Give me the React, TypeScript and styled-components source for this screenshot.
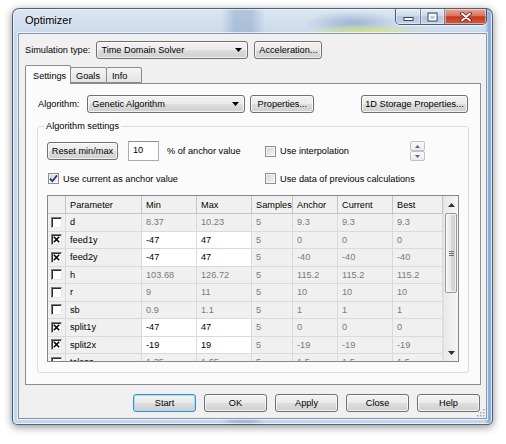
import styled, { createGlobalStyle } from 'styled-components'

const GlobalStyle = createGlobalStyle`
  html, body { margin: 0; padding: 0; background: #fff; }
  body {
    font-family: "Liberation Sans", Arial, sans-serif;
    font-size: 9.2px;
    color: #000;
  }
  * { box-sizing: border-box; }
`

const Desktop = styled.div`
  width: 506px;
  height: 444px;
  padding: 8px 0 0 12px;
  background: #fff;
`

const Window = styled.div`
  width: 481px;
  height: 417px;
  display: flex;
  flex-direction: column;
  padding: 0 5px 5px;
  border: 1px solid rgba(50, 68, 92, 0.8);
  border-radius: 7px 7px 5px 5px;
  box-shadow: 0 2px 9px rgba(0, 0, 0, 0.45), inset 0 0 0 1px rgba(255, 255, 255, 0.6);
  background:
    radial-gradient(ellipse 62px 9px at 352px 24px, rgba(214, 232, 112, 0.9), rgba(214, 232, 112, 0) 100%),
    radial-gradient(ellipse 48px 12px at 340px 14px, rgba(96, 128, 172, 0.45), rgba(96, 128, 172, 0) 100%),
    linear-gradient(90deg, rgba(255, 255, 255, 0) 208px, rgba(104, 136, 178, 0.35) 222px, rgba(104, 136, 178, 0.35) 238px, rgba(255, 255, 255, 0) 252px),
    linear-gradient(90deg, rgba(255, 255, 255, 0) 472px, rgba(120, 160, 214, 0.8) 476px, rgba(120, 160, 214, 0.8) 477px, rgba(255, 255, 255, 0) 480px),
    linear-gradient(180deg, #dbe6f2 0px, #c8d8ea 28px, #c3d6ec 100%);
`

const TitleBar = styled.div`
  height: 24px;
  display: flex;
  align-items: flex-start;
  justify-content: space-between;
`

const Caption = styled.div`
  padding-left: 7px;
  line-height: 22px;
  font-size: 11px;
  text-shadow: 0 0 6px rgba(255, 255, 255, 0.95);
`

const CaptionButtons = styled.div`
  display: flex;
  height: 16px;
  border: 1px solid rgba(42, 58, 82, 0.8);
  border-top: none;
  border-radius: 0 0 5px 5px;
  overflow: hidden;
  box-shadow: 0 1px 0 rgba(255, 255, 255, 0.6);
`

const CaptionBtn = styled.div<{ $w: number; $close?: boolean }>`
  width: ${p => p.$w}px;
  display: flex;
  align-items: center;
  justify-content: center;
  border-right: ${p => (p.$close ? 'none' : '1px solid rgba(42, 58, 82, 0.55)')};
  background: ${p =>
    p.$close
      ? 'linear-gradient(#e9a897 0%, #d8735c 45%, #c53b1f 52%, #d65a3c 100%)'
      : 'linear-gradient(#e6edf5 0%, #cddaea 45%, #b4c7de 52%, #c3d3e6 100%)'};
  box-shadow: inset 0 0 0 1px rgba(255, 255, 255, 0.45);
`

const Client = styled.div`
  flex: 1;
  position: relative;
  display: flex;
  flex-direction: column;
  background: #f0f0f0;
  border: 1px solid #8596aa;
  box-shadow: 0 0 0 1px rgba(255, 255, 255, 0.65);
  padding: 7px 5px 6px 6px;
`

const TopRow = styled.div`
  display: flex;
  align-items: center;
  height: 18px;
  gap: 6px;
`

const Text = styled.span`
  white-space: nowrap;
`

const WinButton = styled.div<{ $w: number; $default?: boolean }>`
  width: ${p => p.$w}px;
  height: 18px;
  flex: none;
  display: flex;
  align-items: center;
  justify-content: center;
  white-space: nowrap;
  border: 1px solid ${p => (p.$default ? '#3c8fc4' : '#707070')};
  border-radius: 3px;
  background: linear-gradient(#f2f2f2 0%, #ebebeb 48%, #dddddd 52%, #cfcfcf 100%);
  box-shadow: inset 0 0 0 1px ${p => (p.$default ? 'rgba(160, 220, 245, 0.9)' : 'rgba(255, 255, 255, 0.7)')};
`

const Combo = styled(WinButton)`
  justify-content: space-between;
  padding: 0 5px 0 4px;
`

const TabStrip = styled.div`
  margin-top: 6px;
  height: 18px;
  display: flex;
  align-items: flex-end;
  position: relative;
  z-index: 1;
`

const Tab = styled.div<{ $w: number; $active?: boolean }>`
  width: ${p => p.$w}px;
  height: ${p => (p.$active ? 19 : 16)}px;
  margin-bottom: ${p => (p.$active ? -1 : 0)}px;
  margin-left: ${p => (p.$active ? 0 : -1)}px;
  padding-left: ${p => (p.$active ? 7 : 5)}px;
  padding-top: ${p => (p.$active ? 2 : 1)}px;
  display: flex;
  align-items: center;
  align-self: flex-start;
  border: 1px solid #898c95;
  border-bottom: ${p => (p.$active ? 'none' : '1px solid #898c95')};
  border-radius: 2px 2px 0 0;
  background: ${p => (p.$active ? '#fbfbfb' : 'linear-gradient(#f5f5f5, #e3e3e3)')};
  ${p => (!p.$active ? 'margin-top: 2px;' : '')}
`

const Panel = styled.div`
  height: 302px;
  display: flex;
  flex-direction: column;
  background: #fbfbfb;
  border: 1px solid #898c95;
  padding: 11px 11px 0;
`

const AlgRow = styled.div`
  display: flex;
  align-items: center;
  height: 18px;
  padding: 0 1px;
  gap: 5px;
`

const AlgLabel = styled(Text)`
  margin-right: 3px;
`

const RightButton = styled(WinButton)`
  margin-left: auto;
`

const GroupBox = styled.div`
  margin-top: 13px;
  display: flex;
  flex-direction: column;
  border: 1px solid #d5dfe5;
  border-radius: 3px;
  padding: 0 9px 10px;
`

const Legend = styled.span`
  align-self: flex-start;
  margin: -6px 0 0 -3px;
  padding: 0 2px;
  line-height: 11px;
  background: #fbfbfb;
`

const OptionRow = styled.div<{ $h: number; $gap: number }>`
  display: grid;
  grid-template-columns: 217px 1fr;
  align-items: center;
  height: ${p => p.$h}px;
  margin-top: ${p => p.$gap}px;
`

const Cluster = styled.div`
  display: flex;
  align-items: center;
`

const NumberInput = styled.div`
  width: 31px;
  height: 20px;
  margin: 0 8px 0 10px;
  padding: 0 0 2px 4px;
  display: flex;
  align-items: center;
  background: #fff;
  border: 1px solid #abadb3;
  border-top-color: #8d8f95;
`

const CheckLabel = styled.div`
  display: flex;
  align-items: center;
  gap: 4px;
  padding-left: 1px;
`

const WinCheck = styled.span`
  width: 11px;
  height: 11px;
  flex: none;
  display: flex;
  align-items: center;
  justify-content: center;
  border: 1px solid #8e8f8f;
  background: linear-gradient(135deg, #d3d3d3 0%, #f7f7f7 100%);
  box-shadow: inset 0 0 0 1px rgba(255, 255, 255, 0.6);
`

const Spinner = styled.div`
  width: 15px;
  height: 20px;
  margin-left: auto;
  margin-right: 34px;
  display: flex;
  flex-direction: column;
`

const SpinHalf = styled.div`
  flex: 1;
  display: flex;
  align-items: center;
  justify-content: center;
  border: 1px solid #c2c2c2;
  border-radius: 2px;
  background: linear-gradient(#fbfbfb, #ebebeb);
`

const TableFrame = styled.div`
  margin-top: 8px;
  height: 167px;
  display: flex;
  border: 1px solid #828790;
  background: #f0f0f0;
  overflow: hidden;
`

const Grid = styled.div`
  width: 395px;
  display: grid;
  grid-template-columns: 18px 76px 55px 55px 41px 45px 55px 50px;
  grid-template-rows: 18px;
  grid-auto-rows: 17.5px;
  align-content: start;
  overflow: hidden;
`

const HeadCell = styled.div`
  display: flex;
  align-items: center;
  padding-left: 4px;
  white-space: nowrap;
  overflow: hidden;
  border-right: 1px solid #c4c4c4;
  border-bottom: 1px solid #c4c4c4;
`

const Cell = styled.div<{ $edit?: boolean; $dark?: boolean }>`
  display: flex;
  align-items: center;
  padding-left: 4px;
  white-space: nowrap;
  overflow: hidden;
  border-right: 1px solid #dadada;
  border-bottom: 1px solid #dadada;
  background: ${p => (p.$edit ? '#fff' : '#f0f0f0')};
  color: ${p => (p.$edit || p.$dark ? '#000' : '#7a7a7a')};
`

const BoxCell = styled(Cell)`
  justify-content: center;
  padding-left: 0;
`

const ClassicBox = styled.span`
  width: 11px;
  height: 11px;
  display: flex;
  align-items: center;
  justify-content: center;
  background: #fff;
  border: 1px solid;
  border-color: #7b7b7b #e6e6e6 #e6e6e6 #7b7b7b;
  box-shadow: inset 1px 1px 0 #2e2e2e;
`

const ScrollBar = styled.div`
  width: 15px;
  display: flex;
  flex-direction: column;
  border-left: 1px solid #e2e2e2;
  background: linear-gradient(90deg, #e9e9e9, #f5f5f5);
`

const ScrollArrow = styled.div`
  height: 17px;
  flex: none;
  display: flex;
  align-items: center;
  justify-content: center;
`

const Thumb = styled.div`
  height: 80px;
  margin: 0 1px;
  display: flex;
  align-items: center;
  justify-content: center;
  border: 1px solid #979797;
  border-radius: 2px;
  background: linear-gradient(90deg, #f4f4f4 0%, #e8e8e8 50%, #d8d8d8 51%, #cfcfcf 100%);
  box-shadow: inset 0 0 0 1px rgba(255, 255, 255, 0.7);
`

const ScrollSpace = styled.div`
  flex: 1;
`

const Footer = styled.div`
  margin-top: 9px;
  display: flex;
  justify-content: flex-end;
  gap: 8px;
  padding-right: 1px;
`

const Grip = styled.svg`
  position: absolute;
  right: 1px;
  bottom: 1px;
`

const Tri = ({ up, color = '#000', w = 7, h = 4 }: { up?: boolean; color?: string; w?: number; h?: number }) => (
  <svg width={w} height={h} viewBox={`0 0 ${w} ${h}`}>
    <polygon points={up ? `0,${h} ${w},${h} ${w / 2},0` : `0,0 ${w},0 ${w / 2},${h}`} fill={color} />
  </svg>
)

const Check = () => (
  <svg width="9" height="9" viewBox="0 0 9 9">
    <path d="M1 4.6 L3.4 7.2 L8 1.4" fill="none" stroke="#24387a" strokeWidth="1.7" />
  </svg>
)

const Cross = () => (
  <svg width="7" height="7" viewBox="0 0 7 7">
    <path d="M0.8 0.8 L6.2 6.2 M6.2 0.8 L0.8 6.2" stroke="#000" strokeWidth="1.6" />
  </svg>
)

const columns = ['Parameter', 'Min', 'Max', 'Samples', 'Anchor', 'Current', 'Best']

const rows = [
  { name: 'd', on: false, v: ['8.37', '10.23', '5', '9.3', '9.3', '9.3'] },
  { name: 'feed1y', on: true, v: ['-47', '47', '5', '0', '0', '0'] },
  { name: 'feed2y', on: true, v: ['-47', '47', '5', '-40', '-40', '-40'] },
  { name: 'h', on: false, v: ['103.68', '126.72', '5', '115.2', '115.2', '115.2'] },
  { name: 'r', on: false, v: ['9', '11', '5', '10', '10', '10'] },
  { name: 'sb', on: false, v: ['0.9', '1.1', '5', '1', '1', '1'] },
  { name: 'split1y', on: true, v: ['-47', '47', '5', '0', '0', '0'] },
  { name: 'split2x', on: true, v: ['-19', '19', '5', '-19', '-19', '-19'] },
  { name: 'tclass', on: false, v: ['1.35', '1.65', '5', '1.5', '1.5', '1.5'] },
]

export default function App() {
  return (
    <>
      <GlobalStyle />
      <Desktop>
        <Window>
          <TitleBar>
            <Caption>Optimizer</Caption>
            <CaptionButtons>
              <CaptionBtn $w={25}>
                <svg width="11" height="10" viewBox="0 0 11 10">
                  <rect x="1" y="5.5" width="9" height="3" fill="#fff" stroke="#34465e" strokeWidth="1" />
                </svg>
              </CaptionBtn>
              <CaptionBtn $w={24}>
                <svg width="11" height="10" viewBox="0 0 11 10">
                  <rect x="1" y="1" width="9" height="8" fill="none" stroke="#34465e" strokeWidth="1" />
                  <rect x="2.5" y="3" width="6" height="4.5" fill="none" stroke="#fff" strokeWidth="1.5" />
                </svg>
              </CaptionBtn>
              <CaptionBtn $w={41} $close>
                <svg width="12" height="10" viewBox="0 0 12 10">
                  <path d="M2 1.5 L10 8.5 M10 1.5 L2 8.5" stroke="#5a1a10" strokeWidth="3.6" strokeLinecap="round" />
                  <path d="M2 1.5 L10 8.5 M10 1.5 L2 8.5" stroke="#fff" strokeWidth="2" strokeLinecap="round" />
                </svg>
              </CaptionBtn>
            </CaptionButtons>
          </TitleBar>

          <Client>
            <TopRow>
              <Text>Simulation type:</Text>
              <Combo $w={152}>
                <span>Time Domain Solver</span>
                <Tri />
              </Combo>
              <WinButton $w={68}>Acceleration...</WinButton>
            </TopRow>

            <TabStrip>
              <Tab $w={46} $active>Settings</Tab>
              <Tab $w={37}>Goals</Tab>
              <Tab $w={36}>Info</Tab>
            </TabStrip>

            <Panel>
              <AlgRow>
                <AlgLabel>Algorithm:</AlgLabel>
                <Combo $w={158}>
                  <span>Genetic Algorithm</span>
                  <Tri />
                </Combo>
                <WinButton $w={64}>Properties...</WinButton>
                <RightButton $w={107}>1D Storage Properties...</RightButton>
              </AlgRow>

              <GroupBox>
                <Legend>Algorithm settings</Legend>

                <OptionRow $h={20} $gap={9}>
                  <Cluster>
                    <WinButton $w={71}>Reset min/max</WinButton>
                    <NumberInput>10</NumberInput>
                    <Text>% of anchor value</Text>
                  </Cluster>
                  <Cluster>
                    <CheckLabel>
                      <WinCheck />
                      <Text>Use interpolation</Text>
                    </CheckLabel>
                    <Spinner>
                      <SpinHalf>
                        <Tri up color="#4f6795" w={5} h={3} />
                      </SpinHalf>
                      <SpinHalf>
                        <Tri color="#4f6795" w={5} h={3} />
                      </SpinHalf>
                    </Spinner>
                  </Cluster>
                </OptionRow>

                <OptionRow $h={17} $gap={9}>
                  <CheckLabel>
                    <WinCheck>
                      <Check />
                    </WinCheck>
                    <Text>Use current as anchor value</Text>
                  </CheckLabel>
                  <CheckLabel>
                    <WinCheck />
                    <Text>Use data of previous calculations</Text>
                  </CheckLabel>
                </OptionRow>

                <TableFrame>
                  <Grid>
                    <HeadCell />
                    {columns.map(c => (
                      <HeadCell key={c}>{c}</HeadCell>
                    ))}
                    {rows.map(r => [
                      <BoxCell key={`${r.name}-box`}>
                        <ClassicBox>{r.on ? <Cross /> : null}</ClassicBox>
                      </BoxCell>,
                      <Cell key={`${r.name}-name`} $dark>
                        {r.name}
                      </Cell>,
                      ...r.v.map((val, i) => (
                        <Cell key={`${r.name}-${i}`} $edit={r.on && i < 2}>
                          {val}
                        </Cell>
                      )),
                    ])}
                  </Grid>
                  <ScrollBar>
                    <ScrollArrow>
                      <Tri up color="#303030" />
                    </ScrollArrow>
                    <Thumb>
                      <svg width="5" height="5" viewBox="0 0 5 5">
                        <path d="M0 0.5 H5 M0 2.5 H5 M0 4.5 H5" stroke="#6e6e6e" strokeWidth="1" />
                      </svg>
                    </Thumb>
                    <ScrollSpace />
                    <ScrollArrow>
                      <Tri color="#303030" />
                    </ScrollArrow>
                  </ScrollBar>
                </TableFrame>
              </GroupBox>
            </Panel>

            <Footer>
              <WinButton $w={63} $default>Start</WinButton>
              <WinButton $w={63}>OK</WinButton>
              <WinButton $w={63}>Apply</WinButton>
              <WinButton $w={63}>Close</WinButton>
              <WinButton $w={63}>Help</WinButton>
            </Footer>

            <Grip width="9" height="9" viewBox="0 0 9 9">
              {[
                [7, 1], [7, 4], [4, 4], [7, 7], [4, 7], [1, 7],
              ].map(([x, y]) => (
                <rect key={`${x}-${y}`} x={x} y={y} width="1.5" height="1.5" fill="#9aa4ae" />
              ))}
            </Grip>
          </Client>
        </Window>
      </Desktop>
    </>
  )
}
